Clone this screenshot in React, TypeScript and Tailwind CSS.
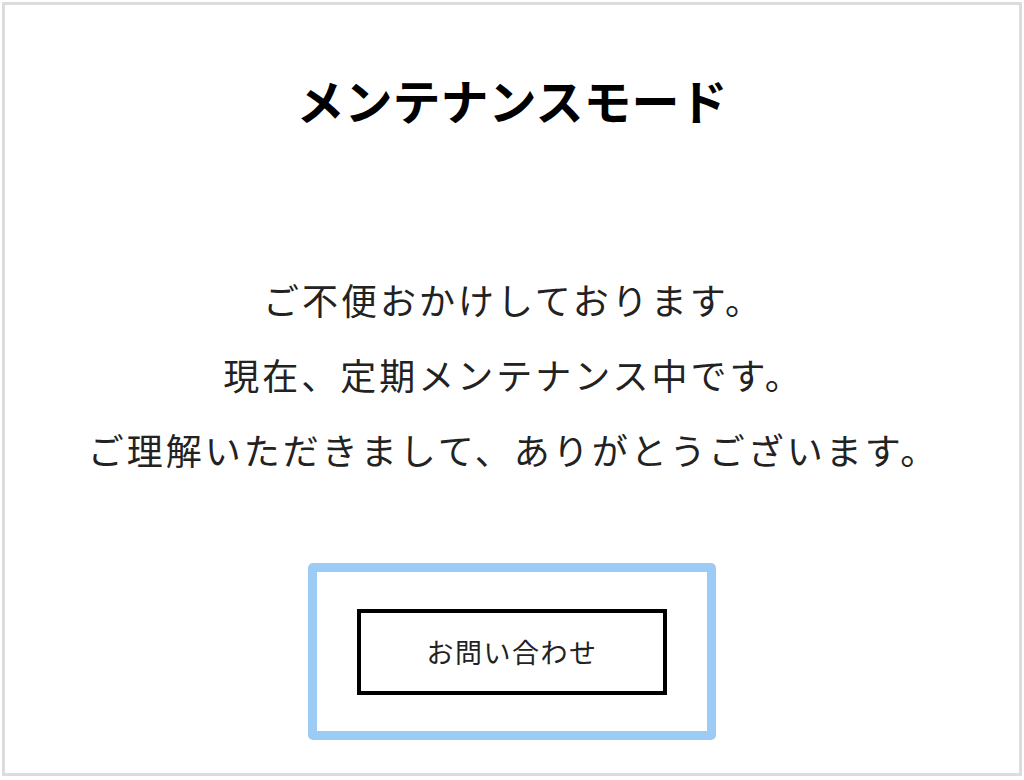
export default function App() {
  const lines = [
    'ご不便おかけしております。',
    '現在、定期メンテナンス中です。',
    'ご理解いただきまして、ありがとうございます。',
  ];

  return (
    <div className="h-[780px] w-[1024px] bg-white pt-[2px] pl-[2px] pr-[2px] pb-[4px]">
      <div
        className="flex h-full flex-col items-center border-[3px] border-[#dcdcdc] text-[#111]"
        style={{ fontFamily: '"Noto Sans CJK JP", "Noto Sans", sans-serif' }}
      >
        <h1 className="mt-[66px] text-[48px] font-bold leading-[57px] text-black">
          メンテナンスモード
        </h1>

        <div className="mt-[134px] flex flex-col items-center">
          {lines.map((line) => (
            <p key={line} className="pl-[3px] text-[36px] leading-[75px] tracking-[3px] text-[#222]">
              {line}
            </p>
          ))}
        </div>

        <div className="mt-[76px] rounded-[5px] border-[9px] border-[#9ccbf5] px-[40px] pt-[37px] pb-[36px]">
          <button className="flex h-[86px] w-[310px] items-center justify-center border-[4px] border-black bg-white text-[27px] tracking-[1.5px] text-[#222]">
            お問い合わせ
          </button>
        </div>
      </div>
    </div>
  );
}
